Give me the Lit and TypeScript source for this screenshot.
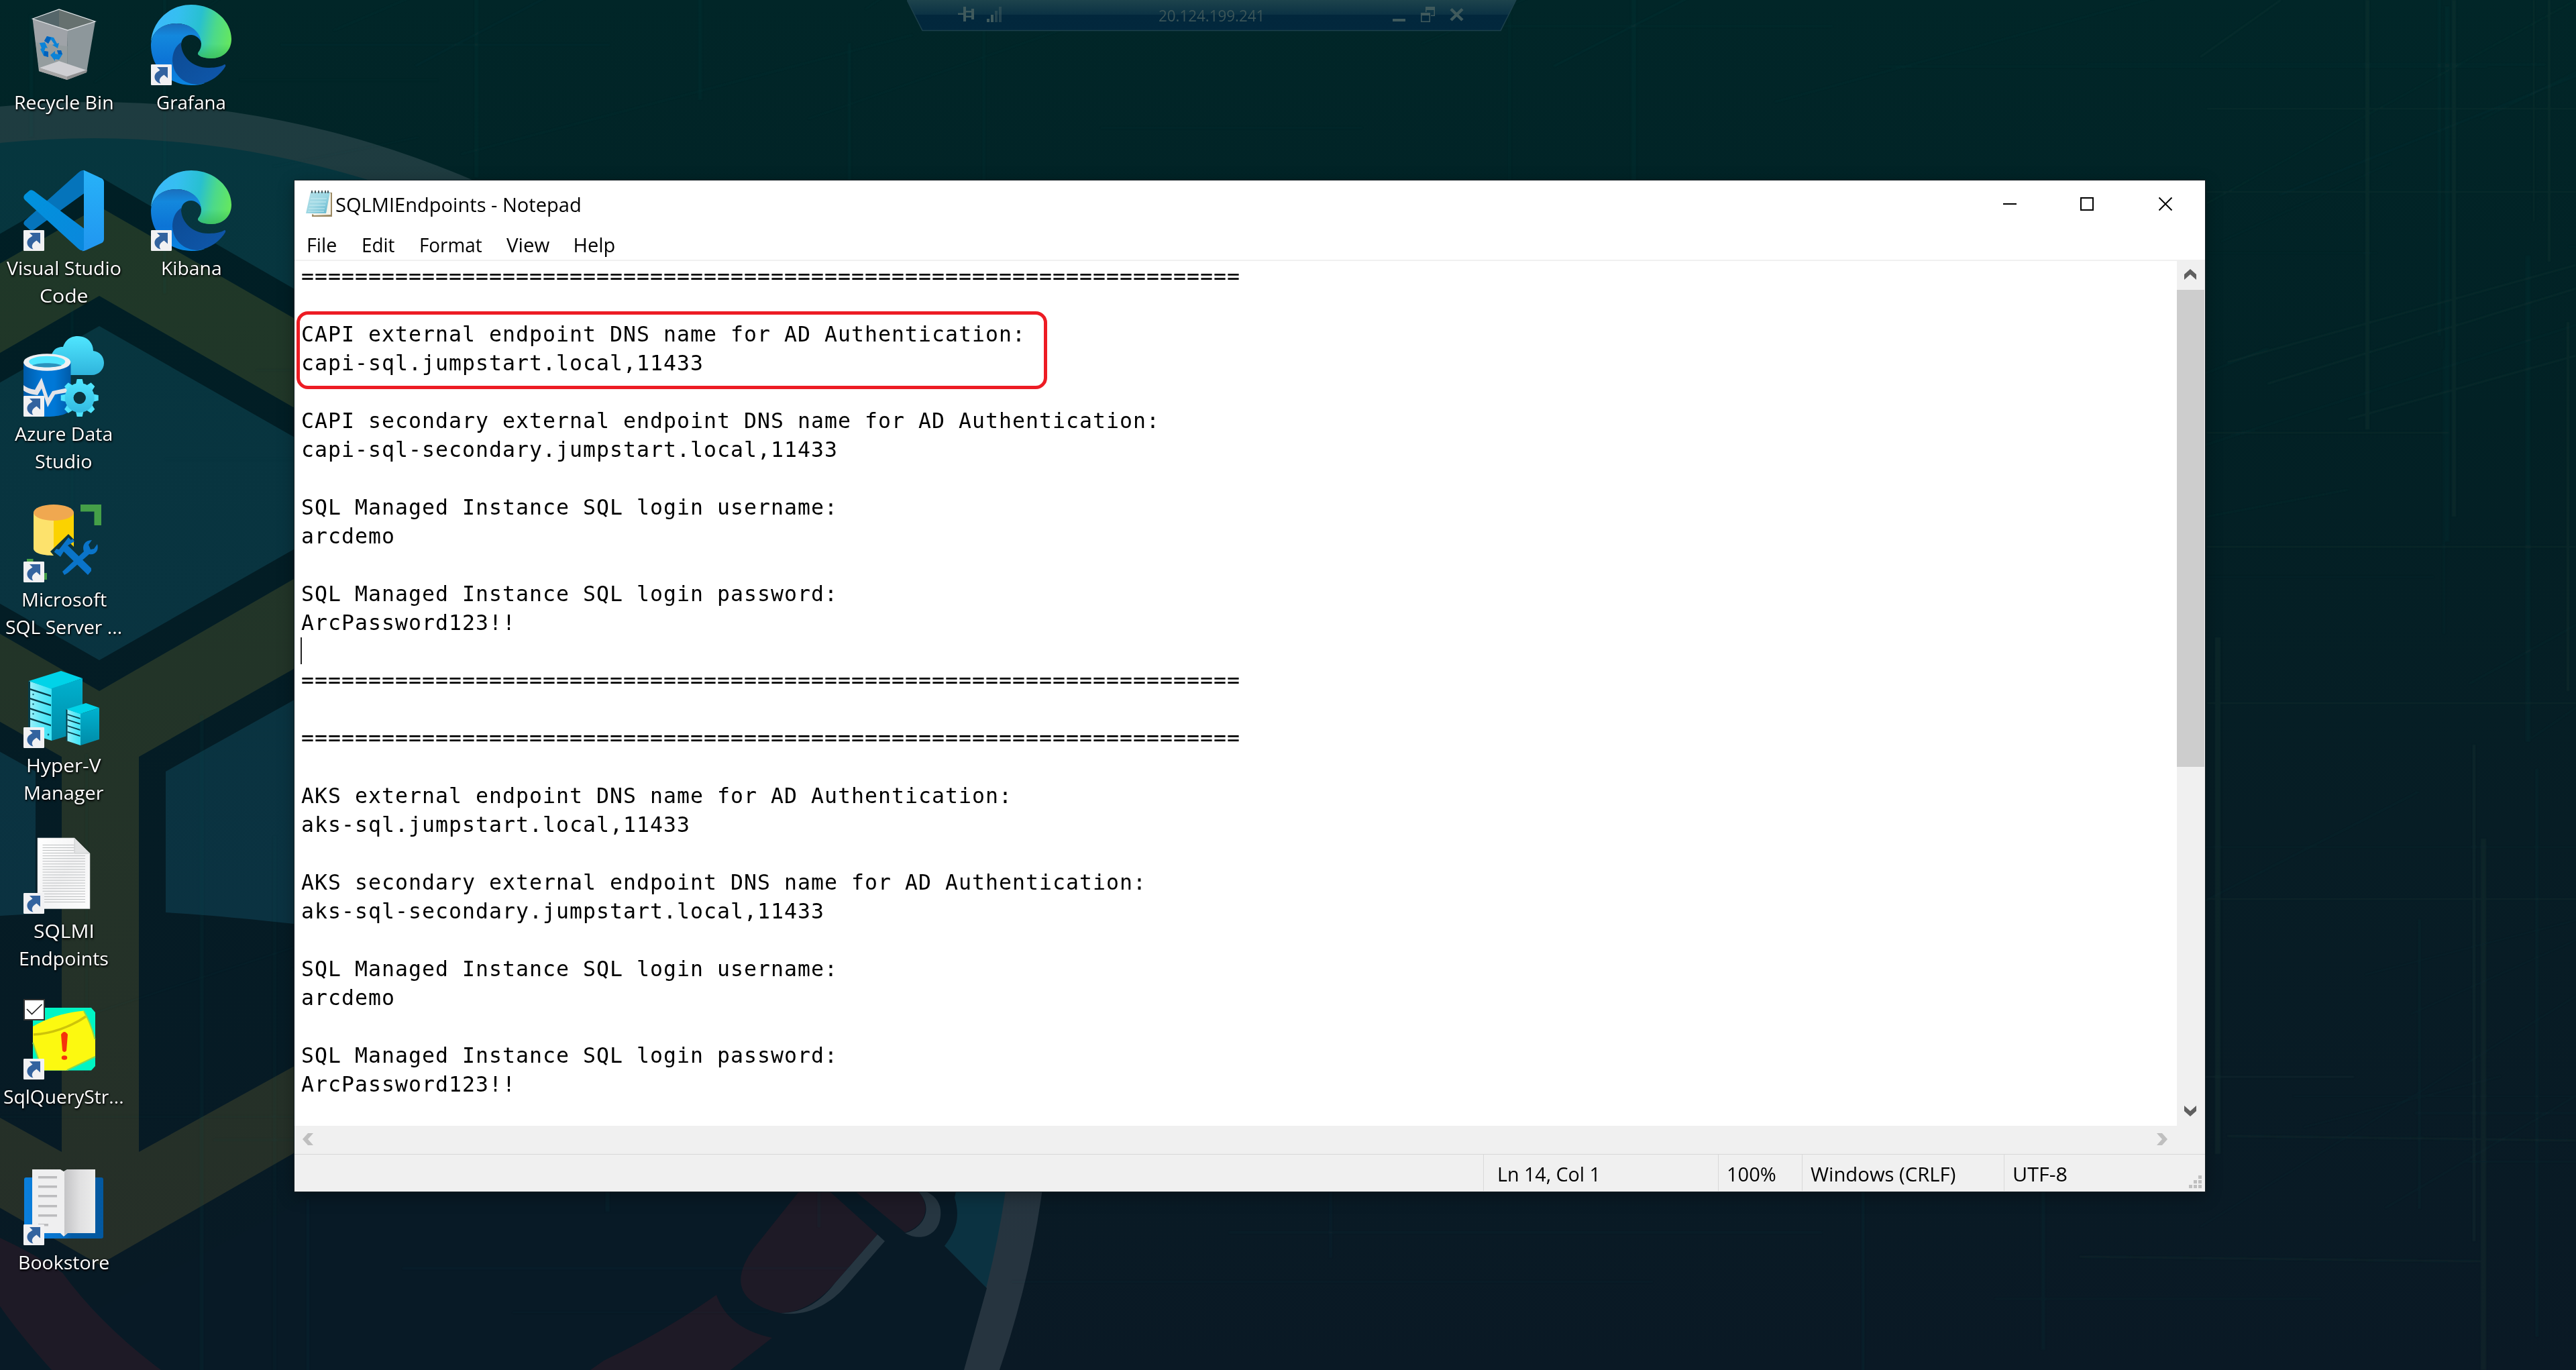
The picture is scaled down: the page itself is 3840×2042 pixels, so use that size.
import { LitElement, html, svg, css } from "lit";
import { customElement, property } from "lit/decorators.js";

/** A single line of text that is condensed or widened to a given width. */
@customElement("fit-text")
class FitText extends LitElement {
  @property() text = "";
  @property({ type: Number }) width = 0;
  static styles = css`
    :host { display: block; flex: none; white-space: pre; }
    .line { display: inline-block; transform-origin: 0 50%; }
  `;
  updated() {
    const line = this.renderRoot.querySelector<HTMLElement>(".line")!;
    const natural = line.offsetWidth;
    this.style.width = `${this.width}px`;
    if (natural > 0) line.style.transform = `scaleX(${this.width / natural})`;
  }
  render() {
    return html`<span class="line">${this.text}</span>`;
  }
}

const recycleBin = svg`
  <polygon points="13.5,21 53,7 107,25 66,38" fill="#55666a"/>
  <polygon points="53,7 107,25 66,38 53,33" fill="#66716f"/>
  <polygon points="13.5,21 66,38 65,112 23,99" fill="#9fa3a8"/>
  <polygon points="66,38 107,25 94,101 65,112" fill="#8d979b"/>
  <polygon points="18,56 66,62 66,108 23,95" fill="#8f9a99" opacity=".6"/>
  <polygon points="24,94 53,84 95,98 65,108" fill="#cfcfd3"/>
  <polygon points="23,94 65,107 65,112 23,99" fill="#a6a5a5"/>
  <polygon points="65,107 95,97 94,101 65,112" fill="#8f8f90"/>
  <polygon points="13.5,21 53,7 107,25 66,38" fill="none" stroke="#e4e7ea" stroke-width="1.2"/>
  <path d="M35,47 L45,49 L50,58 L53,57 L51,65 L43,60 L46,59 L41,52 L37,58 L31,54 Z" fill="#0a83d8"/>
  <path d="M35,47 L41,49 L37,58 L31,54 Z" fill="#0062bd"/>
  <path d="M24,57 L32,56 L36,65 L33,64 L31,69 L37,70 L37,78 L30,76 L25,66 L27,65 Z" fill="#0a83d8"/>
  <path d="M31,69 L37,70 L37,78 L30,76 Z" fill="#0062bd"/>
  <path d="M40,75 L47,69 L47,73 L52,74 L50,68 L56,68 L58,74 L53,82 L47,81 L47,84 Z" fill="#0a83d8"/>
  <path d="M52,74 L50,68 L56,68 L58,74 Z" fill="#0062bd"/>`;

const edge = svg`
  <defs>
    <linearGradient id="eg" x1="0" y1=".5" x2="1" y2=".62">
      <stop offset="0" stop-color="#3cb8fb"/><stop offset=".3" stop-color="#35bff0"/>
      <stop offset=".58" stop-color="#28c0d0"/><stop offset=".78" stop-color="#4cd98a"/>
      <stop offset="1" stop-color="#66e75e"/>
    </linearGradient>
    <linearGradient id="egs" x1="0" y1="0" x2="0" y2="1">
      <stop offset=".55" stop-color="#2fb85a" stop-opacity="0"/><stop offset="1" stop-color="#36b957" stop-opacity=".75"/>
    </linearGradient>
    <linearGradient id="eb" x1="0" y1="0" x2="0" y2="1">
      <stop offset="0" stop-color="#1a6fbd"/><stop offset=".2" stop-color="#1388dd"/>
      <stop offset=".6" stop-color="#0c74d6"/><stop offset="1" stop-color="#0a86e2"/>
    </linearGradient>
    <linearGradient id="ed" x1="0" y1="0" x2="1" y2="1">
      <stop offset="0" stop-color="#0c4a92"/><stop offset="1" stop-color="#0f58ac"/>
    </linearGradient>
  </defs>
  <path d="M0,56 C2,24 28,0 60,0 C96,0 120,26 120,51 C120,69 107,80 90,80 C78,80 70,76 70,73 C70,70 75,68 75,58 C73,40 58,28 38,28 C17,28 3,40 0,56 Z" fill="url(#eg)"/>
  <path d="M120,51 C120,69 107,80 90,80 C78,80 70,76 70,73 C70,70 75,68 75,58 C76,40 90,20 118,40 Z" fill="url(#egs)"/>
  <path d="M0,60 C1,41 15,28 38,28 C58,28 73,39 75,56 C72,49 66,45 60,45 C50,45 45,52 45,60 L46,100 L80,117 C74,119.500 67,120 60,120 C26,120 0,93 0,60 Z" fill="url(#eb)"/>
  <path d="M45,56 C36,62 32,72 32,84 C33,104 49,119 70,119 C90,116 104,104 111,92 C112,89 110,88 108,90 C101,93.500 93,94 85,94 C62,94 46,77 45,60 Z" fill="url(#ed)"/>`;

const vscode = svg`
  <defs><linearGradient id="vr" x1="0" y1="0" x2="0" y2="1"><stop offset="0" stop-color="#27b2f8"/><stop offset="1" stop-color="#2196f0"/></linearGradient>
  <linearGradient id="vb" x1="0" y1="0" x2="1" y2="1"><stop offset="0" stop-color="#0093dd"/><stop offset="1" stop-color="#0a87dc"/></linearGradient></defs>
  <path d="M92,33 L92,0 Q86,-1 81,4 L2,75 Q-1.500,79 2,82 L9,88 Q12,90.500 16,88 Z" fill="#0574bb"/>
  <path d="M16,31 Q12,28 9,30 L2,36 Q-1.500,40 2,44 L81,116 Q86,121 92,119 L92,88 Z" fill="url(#vb)"/>
  <path d="M90,1 Q89,0 87,0 Q90,-.5 93,1 L117,12 Q120,14 120,18 L120,102 Q120,106 117,108 L93,119 Q90,120.500 87,120 Q90,119 90,117 Z" fill="url(#vr)"/>`;

const gearTeeth = [0, 45, 90, 135, 180, 225, 270, 315];
const azureData = svg`
  <defs><linearGradient id="ac" x1="0" y1="0" x2="0" y2="1"><stop offset="0" stop-color="#50e6ff"/><stop offset="1" stop-color="#2fb4dc"/></linearGradient>
  <linearGradient id="ag" gradientUnits="userSpaceOnUse" x1="0" y1="-28" x2="0" y2="28"><stop offset="0" stop-color="#50e6ff"/><stop offset="1" stop-color="#2fb4dc"/></linearGradient>
  <linearGradient id="ab" x1="0" y1="0" x2="1" y2="0"><stop offset="0" stop-color="#005ba8"/><stop offset=".4" stop-color="#0078d7"/><stop offset=".65" stop-color="#0078d7"/><stop offset="1" stop-color="#005ba8"/></linearGradient></defs>
  <path d="M42,58 V28 C45,18 52,16 59,16 C63,4 72,0 81,0 C95,0 104,10 104,22 C114,23 120,31 120,40 C120,50 112,58 102,58 Z" fill="url(#ac)"/>
  <path d="M0,39 H70.500 V108 C70,115 55,120 35,120 C15,120 0,115 0,108 Z" fill="url(#ab)"/>
  <ellipse cx="35.200" cy="39" rx="35.200" ry="12.800" fill="#f0f0f2"/>
  <ellipse cx="35.200" cy="38" rx="27" ry="8.300" fill="#50e6ff"/>
  <path d="M13,43.500 C22,39 48,39 57,43.500 C48,47.500 22,47.500 13,43.500 Z" fill="#2a93bd"/>
  <path d="M0,73 C6,78 13,79 17,80 L27,62 L37,92 L43,82 L66,77 L65,84 L47,87 L36,106 L27,78 L21,88 C13,87 5,85 0,81 Z" fill="#e4e4e8"/>
  <g transform="translate(83.700,92)">
    ${gearTeeth.map((a) => svg`<path d="M-6,-19 L-4,-28 H4 L6,-19 Z" fill="url(#ag)" transform="rotate(${a})"/>`)}
    <circle r="15.500" fill="none" stroke="url(#ag)" stroke-width="13"/>
    <circle r="9" fill="#0b333c"/>
  </g>`;

const ssms = svg`
  <path d="M15,16 V70 C16,77 30,80 45,80 V16 Z" fill="#fde26c"/>
  <path d="M45,16 V80 L75,62 V16 Z" fill="#fbd200"/>
  <ellipse cx="45" cy="16" rx="30" ry="12" fill="#f0a850"/>
  <path d="M85,4 H116 V35 H105.500 V14.500 H85 Z" fill="#459f48"/>
  <path d="M5,85 H14.500 V106 H35 V116 H5 Z" fill="#459f48"/>
  <path d="M40,74 L67,48 L75,56 V72 L62,84 L45,80 Z" fill="#0b333c"/>
  <path d="M75,57 L70,62 L75,67 Z" fill="#fbd200"/>
  <g fill="#0a74c9">
    <path d="M46,74 L49,70 L53,71 L67,53 L71,57 L73,55 L76,59 L66,65 L101,99 L101,103 L96,109 L60,74 L55,82 L46,75 Z"/>
    <path d="M58,104 L90,74 C87,66 91,57 102,57 L97,64 L100,71 L105,70 L110,63 C113,72 107,80 98,78 L66,106 L61,109 Z"/>
  </g>`;

const slots = (x: number, y: number, w: number, s: number, ys: number[]) =>
  ys.map((d) => svg`<path d="M${x},${y + d} l${w},${w * 0.32} v${2.6 * s} l${-w},${-w * 0.32} Z" fill="#063c49"/>`);
const hyperV = svg`
  <defs><linearGradient id="hs" x1="0" y1="0" x2="0" y2="1"><stop offset="0" stop-color="#00b2cf"/><stop offset="1" stop-color="#008ba8"/></linearGradient>
  <linearGradient id="hf" x1="0" y1="0" x2="1" y2="0"><stop offset="0" stop-color="#9df0fa"/><stop offset=".5" stop-color="#63e9f8"/><stop offset="1" stop-color="#3fe3f5"/></linearGradient></defs>
  <polygon points="8,20 42,31 42,109 8,98" fill="url(#hf)"/>
  <polygon points="8,20 56,5 88,16 42,32" fill="#00d3e8"/>
  <polygon points="42,31 88,16 88,95 42,109" fill="url(#hs)"/>
  <polygon points="7,20 10,21 10,98 7,97" fill="#063c49"/>
  ${slots(10, 21, 31, 1, [10, 24, 39, 54])}
  <g fill="#146677"><circle cx="14.500" cy="40" r="1.200"/><circle cx="14.500" cy="54.500" r="1.200"/><circle cx="14.500" cy="69" r="1.200"/><circle cx="37" cy="100" r="1.400"/></g>
  <polygon points="64,62 85,69 85,116 64,109" fill="url(#hf)"/>
  <polygon points="64,62 93,53 113,60 85,69" fill="#00d3e8"/>
  <polygon points="85,69 113,60 113,107 85,116" fill="url(#hs)"/>
  <polygon points="63.500,62 65.500,63 65.500,110 63.500,109" fill="#063c49"/>
  ${slots(65.5, 62, 19, 0.7, [7, 15, 24, 33])}`;

const documentIcon = svg`
  <defs><linearGradient id="df" x1="0" y1="0" x2="1" y2="1"><stop offset="0" stop-color="#ffffff"/><stop offset=".5" stop-color="#f3f3f4"/><stop offset="1" stop-color="#fdfdfd"/></linearGradient></defs>
  <path d="M21,7 H76 L99,30 V112.500 H21 Z" fill="url(#df)" stroke="#c9ccce" stroke-width=".6"/>
  ${Array.from({ length: 22 }, (_, i) => svg`<rect x="28.500" y="${17 + i * 4.05}" width="${i < 4 ? 47 : 63.5}" height=".9" fill="#b7babc"/>`)}
  <path d="M76,7 L99,30 H76 Z" fill="#e2e3e4" stroke="#b9bbbd" stroke-width=".7"/>`;

const sqlStress = svg`
  <path d="M14,15 L18,13 H101 L107,20 V100 L101,106.500 H14 Z" fill="#00f5c4"/>
  <path d="M14,41 C40,26 65,20 90,17.500 C97,30 103,45 107,58 V85 C95,91 80,99 64,106.500 H27 C22,90 17,75 14,64 Z" fill="#fcf910"/>
  <path d="M15,53 C40,52 70,42 93,26" fill="none" stroke="#cdc40a" stroke-width="3.500"/>
  <path d="M90,18 C98,32 103,46 106.500,60 M14,65 C19,80 23,90 27,106 M107,86 L65,106" fill="none" stroke="#8fd84c" stroke-width="2"/>
  <path d="M56,53 Q61,45 66,53 L64,77 Q61,81 58,77 Z" fill="#f5330c"/><ellipse cx="61" cy="87.500" rx="4.200" ry="3.200" fill="#f5330c"/>`;

const book = svg`
  <defs><linearGradient id="bk" x1="0" y1="0" x2="1" y2="0"><stop offset="0" stop-color="#0a7fdc"/><stop offset=".45" stop-color="#0873cc"/><stop offset=".6" stop-color="#045ca6"/><stop offset="1" stop-color="#0358a0"/></linearGradient>
  <linearGradient id="bp" x1="0" y1="0" x2="1" y2="0"><stop offset="0" stop-color="#c4c4c6"/><stop offset=".5" stop-color="#e0e0e1"/><stop offset="1" stop-color="#ececec"/></linearGradient></defs>
  <rect x="1" y="19" width="118" height="91" rx="3" fill="url(#bk)"/>
  <path d="M13,7 H55 L60,10 L65,7 H107 V102 H65 L60,107 L55,102 H13 Z" fill="#efeff0"/>
  <path d="M61,10 L66,7 H107 V102 H66 L61,106 Z" fill="url(#bp)"/>
  <g fill="#bcbcbe"><rect x="22" y="17" width="28" height="3.500"/><rect x="22" y="31" width="28" height="3.500"/><rect x="22" y="45" width="28" height="3.500"/><rect x="22" y="60" width="28" height="3.500"/><rect x="22" y="74" width="28" height="3.500"/><rect x="22" y="88" width="15" height="3.500"/></g>`;

const shortcutBadge = svg`
  <g transform="translate(0,89)">
    <rect width="31" height="31" rx="1.200" fill="#f1f1f3"/>
    <path d="M9,4 H25 V20.500 L19.500,15.500 C13,19 11,24 14.500,28.500 C7,27 3.500,20 6.500,14.500 C8,12 10,11 13.500,8.500 Z" fill="#33639f"/>
  </g>`;

const checkBadge = svg`
  <rect x="1" y="1" width="30" height="30" fill="#fff" stroke="#333" stroke-width="2"/>
  <path d="M5,15 L12.500,22.500 L27.500,8" fill="none" stroke="#222" stroke-width="1.700"/>`;

interface Shortcut {
  icon: unknown;
  lines: [string, number][];
  badge: boolean;
  checked?: boolean;
}
const shortcuts: Shortcut[] = [
  { icon: recycleBin, lines: [["Recycle Bin", 149]], badge: false },
  { icon: vscode, lines: [["Visual Studio", 171], ["Code", 73]], badge: true },
  { icon: azureData, lines: [["Azure Data", 146], ["Studio", 86]], badge: true },
  { icon: ssms, lines: [["Microsoft", 127], ["SQL Server ...", 174]], badge: true },
  { icon: hyperV, lines: [["Hyper-V", 112], ["Manager", 120]], badge: true },
  { icon: documentIcon, lines: [["SQLMI", 91], ["Endpoints", 134]], badge: true },
  { icon: sqlStress, lines: [["SqlQueryStr...", 180]], badge: true, checked: true },
  { icon: book, lines: [["Bookstore", 136]], badge: true },
  { icon: edge, lines: [["Grafana", 104]], badge: true },
  { icon: edge, lines: [["Kibana", 91]], badge: true },
];

/** One icon with its caption on the desktop. */
@customElement("desktop-shortcut")
class DesktopShortcut extends LitElement {
  @property({ attribute: false }) item!: Shortcut;
  static styles = css`
    :host { display: flex; flex-direction: column; align-items: center; }
    .icon { width: 120px; height: 120px; overflow: visible; flex: none; }
    .caption {
      display: flex; flex-direction: column; align-items: center; margin-top: 5px;
      font: 27.7px/41px "Open Sans", "Liberation Sans", sans-serif; color: #fff;
      text-shadow: 0 0 3px #000, 1px 2px 3px rgba(0, 0, 0, .9);
    }
  `;
  render() {
    const { icon, lines, badge, checked } = this.item;
    return html`
      <svg class="icon" viewBox="0 0 120 120">${icon}${badge ? shortcutBadge : null}${checked ? checkBadge : null}</svg>
      <div class="caption">${lines.map(([t, w]) => html`<fit-text .text=${t} .width=${w}></fit-text>`)}</div>`;
  }
}

/** Faint straight scratches spread over the wallpaper. */
function scratches() {
  let seed = 29;
  const rnd = () => (seed = (seed * 16807) % 2147483647) / 2147483647;
  const out = [];
  for (let i = 0; i < 110; i++) {
    const x = rnd() * 3840, y = rnd() * 2042, len = 160 + rnd() * 900, o = 0.05 + rnd() * 0.1;
    const kind = i % 3;
    if (kind === 0) out.push(svg`<rect x=${x} y=${y} width=${len} height="2.500" fill="#1f4a4c" opacity=${o}/>`);
    else if (kind === 1) out.push(svg`<rect x=${x} y=${y - len / 2} width=${3 + rnd() * 6} height=${len} fill="#1f4a4c" opacity=${o}/>`);
    else out.push(svg`<line x1=${x} y1=${y} x2=${x + len} y2=${y - len * (0.2 + rnd() * 0.5)} stroke="#1f4a4c" stroke-width="2.500" opacity=${o}/>`);
  }
  return out;
}

/** Longer lines on the right-hand side: x1, y1, x2, y2, thickness. */
const rightLines = [
  [3529, 0, 3529, 640, 7], [3658, 0, 3658, 770, 7], [3777, 0, 3777, 330, 3], [3800, 0, 3800, 390, 4],
  [3702, 1250, 3702, 2042, 8], [3688, 1110, 3688, 1850, 5], [3306, 950, 3306, 1720, 9], [3828, 480, 3828, 1030, 4],
  [3290, 162, 3840, 162, 2], [3290, 286, 3840, 286, 2], [3290, 645, 3650, 645, 3], [3290, 815, 3840, 815, 3],
  [3290, 1048, 3840, 1048, 2], [3290, 1340, 3840, 1340, 2], [3320, 1693, 3840, 1700, 3], [3100, 1873, 3700, 1880, 3],
  [3290, 303, 3840, 0, 2], [3290, 770, 3500, 730, 2], [3320, 540, 3840, 395, 3], [3380, 572, 3840, 430, 3],
  [3500, 625, 3840, 530, 3], [3280, 85, 3400, 0, 3],
];

const wallpaper = html`
  <svg class="wallpaper" viewBox="0 0 3840 2042" preserveAspectRatio="none">
    <defs>
      <linearGradient id="sky" x1="0" y1="0" x2="0" y2="1">
        <stop offset="0" stop-color="#012628"/><stop offset=".3" stop-color="#022125"/>
        <stop offset=".6" stop-color="#071d25"/><stop offset="1" stop-color="#0a1925"/>
      </linearGradient>
      <linearGradient id="teal" gradientUnits="userSpaceOnUse" x1="0" y1="200" x2="0" y2="1380">
        <stop offset="0" stop-color="#06363e"/><stop offset="1" stop-color="#0b3241"/>
      </linearGradient>
      <linearGradient id="ring" x1="0" y1="0" x2="0" y2="1">
        <stop offset="0" stop-color="#1e3c40"/><stop offset=".6" stop-color="#26343f"/>
      </linearGradient>
      <linearGradient id="green" gradientUnits="userSpaceOnUse" x1="0" y1="300" x2="0" y2="1885">
        <stop offset="0" stop-color="#1f3828"/><stop offset="1" stop-color="#262f28"/>
      </linearGradient>
      <linearGradient id="ink" gradientUnits="userSpaceOnUse" x1="0" y1="260" x2="0" y2="1900">
        <stop offset="0" stop-color="#001f25"/><stop offset="1" stop-color="#081a25"/>
      </linearGradient>
      <filter id="soften" x="0" y="0" width="1" height="1"><feGaussianBlur stdDeviation="1.200"/></filter>
    </defs>
    <rect width="3840" height="2042" fill="url(#sky)"/>
    <circle cx="140" cy="1579" r="1427" fill="url(#ring)"/>
    <circle cx="140" cy="1579" r="1373" fill="url(#teal)"/>
    <path d="M-1233,1365 H53 L247,1360 L440,1379 H1405 L1425,1776 L1423,1785 C1432,1815 1425,1835 1408,1857 L1471,1920 L1437,2042 H-1200 Z" fill="#081a26"/>
    <polygon points="148,263 720,593 720,1650 148,1950 -424,1650 -424,593" fill="url(#ink)"/>
    <polygon points="148,308 680,613 680,1580 148,1885 -384,1580 -384,613" fill="url(#green)"/>
    <polygon points="148,441 660,735 148,1030 -364,735" fill="url(#ink)"/>
    <polygon points="148,486 585,735 148,984 -289,735" fill="url(#teal)"/>
    <polygon points="207,1128 600,905 600,1500 207,1717" fill="url(#ink)"/>
    <polygon points="92,1128 -300,905 -300,1500 92,1717" fill="url(#ink)"/>
    <path d="M247,1150 L500,1009 V1384 Q340,1365 247,1360 Z" fill="url(#teal)"/>
    <path d="M53,1150 L-200,1009 V1384 L0,1365 L53,1362 Z" fill="url(#teal)"/>
    <g fill="#1e1a26">
      <path d="M0,1845 Q50,1868 93,1897 Q150,1975 240,2042 H77 Q30,1990 0,1947 Z"/>
      <path d="M900,2028 Q990,1985 1068,1930 Q1085,1980 1151,1994 L1089,2042 H880 Z"/>
      <path d="M1191,1776 L1124,1860 C1095,1900 1090,1940 1163,1957 C1200,1957 1230,1930 1245,1912 L1308,1840 L1237,1776 Z"/>
      <path d="M1275,1776 L1349,1837 C1378,1828 1390,1800 1369,1776 Z"/>
    </g>
    <path d="M1163,1957 C1206,1964 1240,1940 1258,1920 L1319,1850 L1308,1840 L1245,1912 C1225,1938 1200,1957 1163,1957 Z" fill="#263641"/>
    <path d="M1349,1838 C1374,1852 1400,1840 1402,1812 C1404,1795 1395,1782 1380,1776 H1369 C1392,1800 1378,1830 1349,1838 Z" fill="#263641"/>
    <g filter="url(#soften)">
      ${scratches()}
      <g stroke="#1f4a45" opacity=".17">
        ${rightLines.map(([x1, y1, x2, y2, w]) => svg`<line x1=${x1} y1=${y1} x2=${x2} y2=${y2} stroke-width=${w}/>`)}
      </g>
    </g>
  </svg>`;

const rule = "=".repeat(70);
const documentLines = [
  rule,
  "",
  "CAPI external endpoint DNS name for AD Authentication:",
  "capi-sql.jumpstart.local,11433",
  "",
  "CAPI secondary external endpoint DNS name for AD Authentication:",
  "capi-sql-secondary.jumpstart.local,11433",
  "",
  "SQL Managed Instance SQL login username:",
  "arcdemo",
  "",
  "SQL Managed Instance SQL login password:",
  "ArcPassword123!!",
  "",
  rule,
  "",
  rule,
  "",
  "AKS external endpoint DNS name for AD Authentication:",
  "aks-sql.jumpstart.local,11433",
  "",
  "AKS secondary external endpoint DNS name for AD Authentication:",
  "aks-sql-secondary.jumpstart.local,11433",
  "",
  "SQL Managed Instance SQL login username:",
  "arcdemo",
  "",
  "SQL Managed Instance SQL login password:",
  "ArcPassword123!!",
];
const caretLine = 13;

@customElement("notepad-window")
class NotepadWindow extends LitElement {
  static styles = css`
    :host {
      display: flex; flex-direction: column; background: #fff; color: #000;
      font-family: "Open Sans", "Liberation Sans", sans-serif; font-size: 29px;
      box-shadow: 0 0 0 1px rgba(20, 30, 34, .9), 0 6px 22px rgba(0, 0, 0, .35);
    }
    .title { display: flex; height: 71px; line-height: 71px; padding-left: 17px; }
    .notepad { width: 39px; height: 40px; margin: 14px 5px 0 0; flex: none; }
    .spacer { flex: 1; }
    .controls { width: 254px; height: 24px; margin: 23px 48px 0 0; flex: none; }
    .menu { display: flex; height: 47px; line-height: 50px; padding-left: 18px; }
    .menu fit-text { margin-right: 36px; }
    .body { display: flex; height: 1289px; border-top: 2px solid #f0f0f0; }
    .text {
      flex: 1; padding: 2px 0 0 10px; overflow: hidden;
      font: 31.5px/43px "DejaVu Sans Mono", "Liberation Mono", monospace; letter-spacing: 1.036px;
    }
    .row { height: 43px; white-space: pre; }
    .caret { display: block; width: 2px; height: 40px; margin-left: -1px; background: #222; }
    .vscroll { display: flex; flex-direction: column; width: 42px; background: #f0f0f0; }
    .arrow { width: 42px; height: 43px; flex: none; }
    .thumb { width: 41px; height: 711px; background: #cdcdcd; }
    .hscroll { display: flex; justify-content: space-between; height: 42px; padding-right: 42px; background: #f0f0f0; }
    .harrow { width: 40px; height: 42px; }
    .status {
      display: grid; grid-template-columns: 1773px 350px 125px 300.500px 1fr; height: 55px; line-height: 57px;
      background: #f0f0f0; border-top: 1px solid #d7d7d7;
    }
    .cell { border-right: 1px solid #d9d9d9; height: 54px; box-sizing: border-box; padding-left: 20px; }
    .cell.tight { padding-left: 12px; }
    .cell.last { border: 0; display: flex; justify-content: space-between; }
    .grip { width: 20px; height: 20px; margin: 31px 4px 0 0; }
  `;
  render() {
    return html`
      <div class="title">
        <svg class="notepad" viewBox="0 0 39 40">
          <defs><linearGradient id="np" x1="0" y1="0" x2="1" y2="1"><stop offset="0" stop-color="#b4dfe8"/><stop offset=".5" stop-color="#9dd7e3"/><stop offset="1" stop-color="#5fb4cc"/></linearGradient></defs>
          <path d="M33,4 L39,4 V40 H9 V37 Z" fill="#9c8a64"/>
          <path d="M34,4 L37,5 V37 L12,38 L9,35 Z" fill="#f7f4ea"/>
          <path d="M7,3 H36 L30,35 H0 Z" fill="url(#np)"/>
          <g stroke="#c9ecf2" stroke-width="1"><path d="M7,13 H31 M6,18 H30 M5,23 H29 M4,28 H28 M3,32 H27"/></g>
          <path d="M9,5 V1 M14,5 V1 M19,5 V1 M24,5 V1 M29,5 V1 M33,5 V1" stroke="#4d5a5e" stroke-width="2"/>
        </svg>
        <fit-text .text=${"SQLMIEndpoints - Notepad"} .width=${367}></fit-text>
        <div class="spacer"></div>
        <svg class="controls" viewBox="0 0 254 24">
          <path d="M1,12 H21" stroke="#000" stroke-width="2"/>
          <rect x="117" y="3" width="18" height="18" fill="none" stroke="#000" stroke-width="2"/>
          <path d="M233.500,2.500 L252.500,21.500 M252.500,2.500 L233.500,21.500" stroke="#000" stroke-width="1.900"/>
        </svg>
      </div>
      <div class="menu">
        ${([["File", 45.5], ["Edit", 50], ["Format", 94], ["View", 64], ["Help", 63]] as [string, number][]).map(
          ([t, w]) => html`<fit-text .text=${t} .width=${w}></fit-text>`,
        )}
      </div>
      <div class="body">
        <div class="text">
          ${documentLines.map((l, i) => html`<div class="row">${i === caretLine ? html`<span class="caret"></span>` : l}</div>`)}
        </div>
        <div class="vscroll">
          <svg class="arrow" viewBox="0 0 42 43"><path d="M11,20 L20,12 L29,20 V28 L20,20 L11,28 Z" fill="#5f5f5f"/></svg>
          <div class="thumb"></div>
          <div class="spacer"></div>
          <svg class="arrow" viewBox="0 0 42 43"><path d="M11,13 L20,21 L29,13 V21 L20,29 L11,21 Z" fill="#5f5f5f"/></svg>
        </div>
      </div>
      <div class="hscroll">
        <svg class="harrow" viewBox="0 0 40 42"><path d="M20,11 H28 L20,20 L28,29 H20 L12,20 Z" fill="#bfbfbf"/></svg>
        <svg class="harrow" viewBox="0 0 40 42"><path d="M10,11 H18 L26,20 L18,29 H10 L18,20 Z" fill="#bfbfbf"/></svg>
      </div>
      <div class="status">
        <div class="cell"></div>
        <div class="cell"><fit-text .text=${"Ln 14, Col 1"} .width=${154}></fit-text></div>
        <div class="cell tight"><fit-text .text=${"100%"} .width=${74}></fit-text></div>
        <div class="cell tight"><fit-text .text=${"Windows (CRLF)"} .width=${216}></fit-text></div>
        <div class="cell tight last">
          <fit-text .text=${"UTF-8"} .width=${82}></fit-text>
          <svg class="grip" viewBox="0 0 20 20"><path d="M14,0 h5 v5 h-5 Z M7,7 h5 v5 h-5 Z M14,7 h5 v5 h-5 Z M0,14 h5 v5 h-5 Z M7,14 h5 v5 h-5 Z M14,14 h5 v5 h-5 Z" fill="#bfbfbf"/></svg>
        </div>
      </div>`;
  }
}

@customElement("app-root")
class AppRoot extends LitElement {
  static styles = css`
    :host { display: block; position: relative; width: 3840px; height: 2042px; overflow: hidden; background: #03222a; }
    .wallpaper { position: absolute; inset: 0; width: 3840px; height: 2042px; }
    .shortcuts {
      position: relative; display: grid; grid-auto-flow: column;
      grid-template-rows: repeat(8, 247px); grid-auto-columns: 190px; padding-top: 7px;
    }
    .window { position: absolute; left: 439px; top: 269px; width: 2848px; height: 1507px; }
    .highlight {
      position: absolute; left: 442px; top: 464px; width: 1119px; height: 116px; box-sizing: border-box;
      border: 5px solid #ed1c24; border-radius: 17px;
    }
    .connection { position: absolute; left: 1352px; top: 0; width: 909px; height: 48px; }
    .address { position: absolute; left: 1727px; top: 7px; font: 23.5px/32px "Open Sans", "Liberation Sans", sans-serif; color: #3b5558; }
  `;
  render() {
    return html`
      ${wallpaper}
      <div class="shortcuts">${shortcuts.map((s) => html`<desktop-shortcut .item=${s}></desktop-shortcut>`)}</div>
      <svg class="connection" viewBox="0 0 909 48">
        <defs><linearGradient id="cb" x1="0" y1="0" x2="0" y2="1">
          <stop offset="0" stop-color="#1d434c"/><stop offset=".47" stop-color="#0b3244"/>
          <stop offset=".48" stop-color="#02273c"/><stop offset="1" stop-color="#02283d"/></linearGradient></defs>
        <path d="M0,0 H908 L885,46 H23 Z" fill="url(#cb)"/>
        <path d="M0,0 L23,45.500 H885 L908,0" fill="none" stroke="#1d404b" stroke-width="1.500"/>
        <g fill="#405a5c">
          <path d="M76,19.500 H84 V10 H88 V16 H96 V13 H100 V29 H96 V26 H88 V32 H84 V22 H76 Z M88,18.500 V23.500 H96 V18.500 Z" fill-rule="evenodd"/>
          <rect x="119" y="28" width="4" height="5"/><rect x="125" y="22" width="4" height="11"/>
          <rect x="131" y="16" width="4" height="17" opacity=".55"/><rect x="137" y="10" width="4" height="23" opacity=".55"/>
          <rect x="724" y="28" width="19" height="4"/>
          <path d="M773,10 H787 V24 H781 V22.500 H785.500 V15 H774.500 V18 H773 Z"/>
          <path d="M766,19 H780 V33 H766 Z M767.500,23 V31.500 H778.500 V23 Z" fill-rule="evenodd"/>
        </g>
        <path d="M811,13.500 L828,30 M828,13.500 L811,30" stroke="#405a5c" stroke-width="4.500"/>
      </svg>
      <fit-text class="address" .text=${"20.124.199.241"} .width=${158}></fit-text>
      <notepad-window class="window"></notepad-window>
      <div class="highlight"></div>`;
  }
}
